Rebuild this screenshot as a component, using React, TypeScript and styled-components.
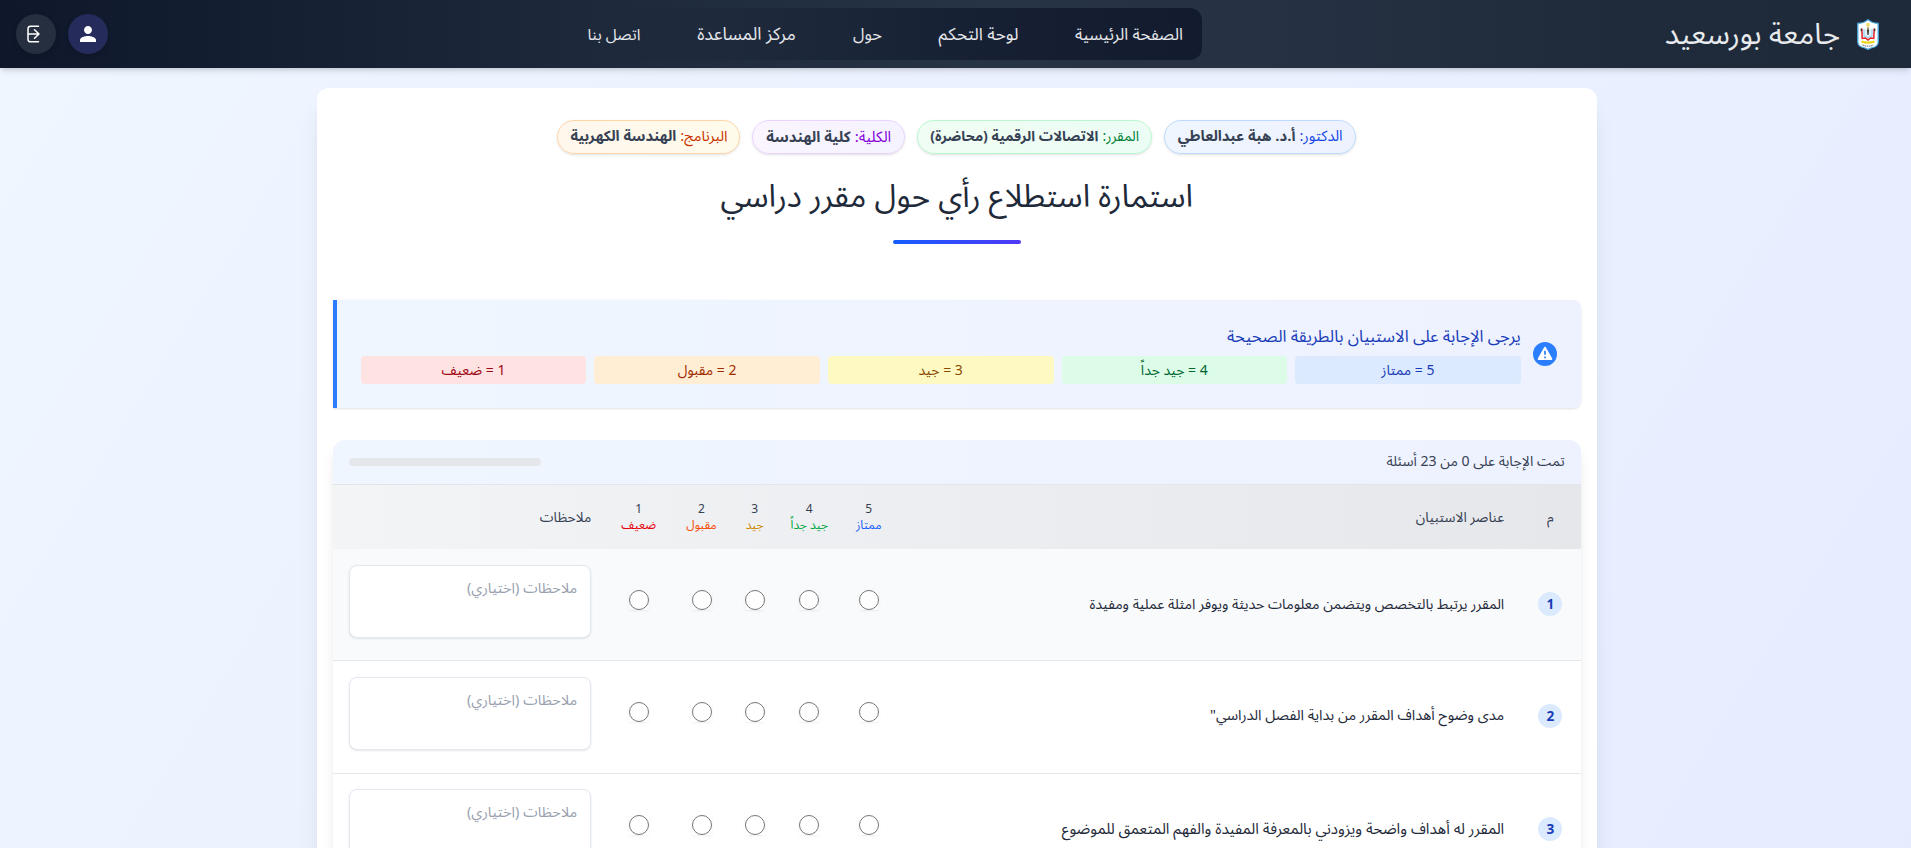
import React from 'react';
import styled, { createGlobalStyle } from 'styled-components';
import { MdPerson } from 'react-icons/md';

const FONT = `"Noto Sans Arabic", "Open Sans", "Noto Sans", "DejaVu Sans", sans-serif`;

const GlobalStyle = createGlobalStyle`
  *, *::before, *::after { box-sizing: border-box; }
  html, body { margin: 0; height: 100%; overflow: hidden; }
  body { font-family: ${FONT}; color: #1e2939; direction: rtl; }
  h1, h2, p { margin: 0; font-weight: 400; }
`;

const Page = styled.div`
  height: 100vh;
  overflow: hidden;
  display: flex;
  flex-direction: column;
  background: linear-gradient(to bottom right, #eff6ff, #e0e7ff) 0 0 / 100% 3100px no-repeat;
`;

const Header = styled.header`
  flex: none;
  height: 68px;
  display: flex;
  align-items: center;
  justify-content: space-between;
  padding: 0 32px 0 16px;
  z-index: 1;
  background: linear-gradient(to right, #0f172b 0%, #152033 15%, #1d293b 30%, #273445 52%, #263143 66%, #1f2b3b 85%, #1e2939 100%);
  box-shadow: 0 4px 6px -1px rgba(0, 0, 0, 0.12), 0 2px 4px -2px rgba(0, 0, 0, 0.12);
`;

const Brand = styled.div`
  display: flex;
  align-items: center;
  gap: 17px;
  width: 677px;
`;

const BrandName = styled.span`
  padding-top: 2px;
  font-size: 29.4px;
  line-height: 36px;
  color: #e8eaed;
  white-space: nowrap;
`;

const Nav = styled.nav`
  display: flex;
  align-items: center;
  height: 52px;
  margin-left: auto;
  padding: 2px 19px 0;
  gap: 56px;
  border-radius: 12px;
  background: linear-gradient(to left, #131b2e 0%, rgba(20, 29, 49, 0.88) 35%, rgba(28, 40, 58, 0.6) 75%, rgba(29, 41, 59, 0) 100%);
`;

const NavLink = styled.a<{ $width: number; $size: number }>`
  display: flex;
  justify-content: center;
  width: ${(p) => p.$width}px;
  font-size: ${(p) => p.$size}px;
  line-height: 24px;
  white-space: nowrap;
  color: #e5e7eb;
`;

const Actions = styled.div`
  display: flex;
  gap: 12px;
`;

const RoundButton = styled.button<{ $bg: string }>`
  width: 40px;
  height: 40px;
  padding: 0;
  border: 0;
  border-radius: 50%;
  display: grid;
  place-items: center;
  color: #fff;
  background: ${(p) => p.$bg};
  box-shadow: 0 2px 5px rgba(0, 0, 0, 0.18);
`;

const Card = styled.main`
  flex: none;
  width: 1280px;
  height: 3000px;
  margin: 20px 314.3px 0 0;
  padding: 32px 16px;
  display: flex;
  flex-direction: column;
  border-radius: 12px;
  background: #fff;
  box-shadow: 0 20px 25px -5px rgba(0, 0, 0, 0.1), 0 8px 10px -6px rgba(0, 0, 0, 0.1);
`;

const Chips = styled.div`
  display: flex;
  justify-content: center;
  gap: 12px;
`;

const Chip = styled.div<{ $width: number; $size: number; $label: string; $border: string; $from: string; $to: string }>`
  width: ${(p) => p.$width}px;
  height: 34px;
  display: flex;
  align-items: center;
  justify-content: center;
  gap: 4px;
  white-space: nowrap;
  font-size: ${(p) => p.$size}px;
  line-height: 20px;
  border: 1px solid ${(p) => p.$border};
  border-radius: 17px;
  background: linear-gradient(to right, ${(p) => p.$from}, ${(p) => p.$to});
  box-shadow: 0 1px 3px rgba(0, 0, 0, 0.1), 0 1px 2px -1px rgba(0, 0, 0, 0.1);

  span { color: ${(p) => p.$label}; }
  strong { color: #364153; font-weight: 700; }
`;

const Title = styled.h1`
  margin-top: 23px;
  font-size: 31.6px;
  line-height: 40px;
  text-align: center;
  color: #1e2939;
`;

const TitleRule = styled.div`
  width: 128px;
  height: 4px;
  margin: 23px auto 0;
  border-radius: 2px;
  background: linear-gradient(to right, #155dfc, #4f39f6);
`;

const Notice = styled.section`
  height: 108px;
  margin-top: 56px;
  padding: 24px;
  display: flex;
  align-items: center;
  gap: 12px;
  border-left: 4px solid #2b7fff;
  border-radius: 0 8px 8px 0;
  background: linear-gradient(to right, #eff6ff, #eef2ff);
  box-shadow: 0 1px 3px rgba(0, 0, 0, 0.1), 0 1px 2px -1px rgba(0, 0, 0, 0.1);
`;

const NoticeIcon = styled.div`
  flex: none;
  width: 24px;
  height: 24px;
  border-radius: 50%;
  display: grid;
  place-items: center;
  background: #2b7fff;
`;

const NoticeBody = styled.div`
  flex: 1;
`;

const NoticeTitle = styled.h2`
  height: 24px;
  font-size: 16.6px;
  line-height: 26px;
  color: #193cb8;
`;

const Scale = styled.div`
  display: grid;
  grid-template-columns: repeat(5, 1fr);
  gap: 8px;
  margin-top: 8px;
`;

const ScaleItem = styled.div<{ $bg: string; $fg: string }>`
  height: 28px;
  border-radius: 4px;
  font-size: 14px;
  line-height: 29px;
  text-align: center;
  background: ${(p) => p.$bg};
  color: ${(p) => p.$fg};
`;

const Survey = styled.section`
  flex: 1;
  margin-top: 32px;
  overflow: hidden;
  border-radius: 12px;
  background: #fff;
  box-shadow: 0 10px 15px -3px rgba(0, 0, 0, 0.1), 0 4px 6px -4px rgba(0, 0, 0, 0.1);
`;

const Progress = styled.div`
  height: 45px;
  padding: 0 16px;
  display: flex;
  align-items: center;
  justify-content: space-between;
  border-bottom: 1px solid #e2e6ec;
  background: linear-gradient(to right, #eff6ff, #eef2ff);
`;

const ProgressText = styled.span`
  font-size: 14.1px;
  line-height: 20px;
  color: #364153;
`;

const ProgressTrack = styled.div`
  width: 192px;
  height: 8px;
  border-radius: 4px;
  background: #e5e7eb;
`;

const Row = styled.div<{ $shaded?: boolean }>`
  display: grid;
  grid-template-columns: 60.500px 1fr 53.400px 65.600px 43.600px 62.800px 62.800px 274.600px;
  height: 112.25px;
  border-bottom: 1px solid #e5e7eb;
  background: ${(p) => (p.$shaded ? '#f9fafb' : '#fff')};
`;

const HeadRow = styled(Row)`
  height: 64px;
  padding-top: 2px;
  align-items: center;
  border-bottom: 0;
  background: linear-gradient(to right, #f3f4f6, #e5e7eb);
`;

const HeadCell = styled.div<{ $center?: boolean }>`
  padding: 0 16px;
  font-size: 13.9px;
  line-height: 20px;
  text-align: ${(p) => (p.$center ? 'center' : 'right')};
  color: #364153;
`;

const ScoreHead = styled.div<{ $fg: string }>`
  display: flex;
  flex-direction: column;
  align-items: center;
  font-size: 12px;
  line-height: 16px;
  white-space: nowrap;
  color: #364153;

  span { color: ${(p) => p.$fg}; }
`;

const NumberCell = styled.div`
  padding-top: 43.2px;
  display: flex;
  justify-content: center;
`;

const Badge = styled.span`
  width: 24px;
  height: 24px;
  border-radius: 50%;
  font-size: 13.6px;
  font-weight: 700;
  line-height: 25px;
  text-align: center;
  color: #193cb8;
  background: #dbeafe;
`;

const Question = styled.p<{ $size: number }>`
  padding: 45px 16px 0;
  font-size: ${(p) => p.$size}px;
  line-height: 20px;
  white-space: nowrap;
  color: #1e2939;
`;

const RadioCell = styled.div`
  padding-top: 41.2px;
  display: flex;
  justify-content: center;
  align-items: flex-start;
`;

const Radio = styled.input.attrs({ type: 'radio' })`
  width: 20px;
  height: 20px;
  margin: 0;
  box-shadow: 0 1px 3px rgba(0, 0, 0, 0.05), 0 1px 2px -1px rgba(0, 0, 0, 0.05);
`;

const NotesCell = styled.div`
  padding: 15.9px 16px 0;
`;

const Notes = styled.textarea`
  display: block;
  width: 100%;
  height: 73px;
  padding: 11px 13px;
  resize: none;
  font-family: ${FONT};
  font-size: 14.6px;
  line-height: 24px;
  border: 1px solid #e2e8f0;
  border-radius: 8px;
  background: #fff;
  box-shadow: 0 1px 3px rgba(0, 0, 0, 0.08), 0 1px 2px -1px rgba(0, 0, 0, 0.08);

  &::placeholder { color: #99a1af; opacity: 1; }
`;

const Crest = () => (
  <svg width="22" height="31" viewBox="0 0 22 31">
    <path d="M11 .8 L14.5 3 Q17.500 4.200 21.200 4.300 V23 Q21 26.500 17.500 28 Q14 29 11 30.300 Q8 29 4.500 28 Q1 26.500 .8 23 V4.300 Q4.500 4.200 7.500 3 Z" fill="#fff" stroke="#48a9e0" strokeWidth="1.300" />
    <circle cx="11" cy="5.800" r="2" fill="#ece06a" />
    <path d="M4.800 9.500 L5.200 19.500 L8.500 19 L11 21 L13.500 19 L16.800 19.500 L17.200 9.500" fill="#dff1fa" stroke="#e5232b" strokeWidth="1.500" />
    <path d="M7 10.500 V17 L11 18.500 L15 17 V10.500" fill="none" stroke="#8fd0ec" strokeWidth="1" />
    <path d="M4.200 9.800 V12 M17.800 9.800 V12" stroke="#222" strokeWidth="1.100" />
    <path d="M11 7 L12 10 L11.500 16 H10.500 L10 10 Z" fill="#222" />
    <path d="M11 6.500 V11" stroke="#f5e9a0" strokeWidth="1" />
    <path d="M4.500 22.500 Q11 24.800 17.500 22.500" fill="none" stroke="#e6d817" strokeWidth="2.200" />
    <path d="M5.500 26 Q11 28.400 16.500 26" fill="none" stroke="#555" strokeWidth="1" strokeDasharray="1.500 .7" />
  </svg>
);

const LogoutIcon = () => (
  <svg width="20" height="20" viewBox="0 0 20 20" fill="none" stroke="#fff" strokeWidth="1.500" strokeLinecap="round">
    <path d="M12.500 2.200 H4.800 Q2 2.200 2 4.800 V15.200 Q2 17.800 4.800 17.800 H12.500" />
    <path d="M2.300 10 H13 M8.500 5.800 L13 10 L8.500 14.200" strokeLinejoin="round" />
  </svg>
);

const WarningIcon = () => (
  <svg width="18" height="18" viewBox="0 0 18 18">
    <path d="M9 2.700 L15.300 14 H2.700 Z" fill="#fff" stroke="#fff" strokeWidth="2" strokeLinejoin="round" />
    <path d="M9 5.800 V9.800 M9 11.600 V13.200" stroke="#2b7fff" strokeWidth="1.700" />
  </svg>
);

const links = [
  { label: 'الصفحة الرئيسية', width: 108, size: 16.5 },
  { label: 'لوحة التحكم', width: 81, size: 17.2 },
  { label: 'حول', width: 29, size: 16.5 },
  { label: 'مركز المساعدة', width: 101, size: 17.6 },
  { label: 'اتصل بنا', width: 52, size: 15.7 },
];

const chips = [
  { label: 'الدكتور:', value: 'أ.د. هبة عبدالعاطي', width: 191.5, size: 14.8, fg: '#1447e6', border: '#bedbff', from: '#eff6ff', to: '#eef2ff' },
  { label: 'المقرر:', value: 'الاتصالات الرقمية (محاضرة)', width: 235.5, size: 14.1, fg: '#008236', border: '#b9f8cf', from: '#f0fdf4', to: '#ecfdf5' },
  { label: 'الكلية:', value: 'كلية الهندسة', width: 152.5, size: 15, fg: '#8200db', border: '#e9d4ff', from: '#faf5ff', to: '#f5f3ff' },
  { label: 'البرنامج:', value: 'الهندسة الكهربية', width: 183, size: 14.7, fg: '#ca3500', border: '#ffd6a8', from: '#fff7ed', to: '#fffbeb' },
];

const scale = [
  { score: 5, label: 'ممتاز', bg: '#dbeafe', fg: '#193cb8', head: '#155dfc' },
  { score: 4, label: 'جيد جداً', bg: '#dcfce7', fg: '#016630', head: '#00a63e' },
  { score: 3, label: 'جيد', bg: '#fef9c2', fg: '#894b00', head: '#d08700' },
  { score: 2, label: 'مقبول', bg: '#ffedd4', fg: '#9f2d00', head: '#f54900' },
  { score: 1, label: 'ضعيف', bg: '#ffe2e2', fg: '#9f0712', head: '#e7000b' },
];

const questions = [
  { text: 'المقرر يرتبط بالتخصص ويتضمن معلومات حديثة ويوفر امثلة عملية ومفيدة', size: 14.2 },
  { text: 'مدى وضوح أهداف المقرر من بداية الفصل الدراسي"', size: 14.5 },
  { text: 'المقرر له أهداف واضحة ويزودني بالمعرفة المفيدة والفهم المتعمق للموضوع', size: 15.15 },
];

export default function App() {
  return (
    <Page>
      <GlobalStyle />
      <Header>
        <Brand>
          <Crest />
          <BrandName>جامعة بورسعيد</BrandName>
        </Brand>
        <Nav>
          {links.map((l) => (
            <NavLink key={l.label} $width={l.width} $size={l.size}>{l.label}</NavLink>
          ))}
        </Nav>
        <Actions>
          <RoundButton $bg="#252b5a"><MdPerson size={24} /></RoundButton>
          <RoundButton $bg="#262f40"><LogoutIcon /></RoundButton>
        </Actions>
      </Header>
      <Card>
        <Chips>
          {chips.map((c) => (
            <Chip key={c.label} $width={c.width} $size={c.size} $label={c.fg} $border={c.border} $from={c.from} $to={c.to}>
              <span>{c.label}</span>
              <strong>{c.value}</strong>
            </Chip>
          ))}
        </Chips>
        <Title>استمارة استطلاع رأي حول مقرر دراسي</Title>
        <TitleRule />
        <Notice>
          <NoticeIcon><WarningIcon /></NoticeIcon>
          <NoticeBody>
            <NoticeTitle>يرجى الإجابة على الاستبيان بالطريقة الصحيحة</NoticeTitle>
            <Scale>
              {scale.map((s) => (
                <ScaleItem key={s.score} $bg={s.bg} $fg={s.fg}>{s.score} = {s.label}</ScaleItem>
              ))}
            </Scale>
          </NoticeBody>
        </Notice>
        <Survey>
          <Progress>
            <ProgressText>تمت الإجابة على 0 من 23 أسئلة</ProgressText>
            <ProgressTrack />
          </Progress>
          <HeadRow>
            <HeadCell $center>م</HeadCell>
            <HeadCell>عناصر الاستبيان</HeadCell>
            {scale.map((s) => (
              <ScoreHead key={s.score} $fg={s.head}>
                {s.score}
                <span>{s.label}</span>
              </ScoreHead>
            ))}
            <HeadCell>ملاحظات</HeadCell>
          </HeadRow>
          {questions.map((q, i) => (
            <Row key={q.text} $shaded={i === 0}>
              <NumberCell><Badge>{i + 1}</Badge></NumberCell>
              <Question $size={q.size}>{q.text}</Question>
              {scale.map((s) => (
                <RadioCell key={s.score}><Radio name={`q${i}`} /></RadioCell>
              ))}
              <NotesCell><Notes placeholder="ملاحظات (اختياري)" /></NotesCell>
            </Row>
          ))}
        </Survey>
      </Card>
    </Page>
  );
}
